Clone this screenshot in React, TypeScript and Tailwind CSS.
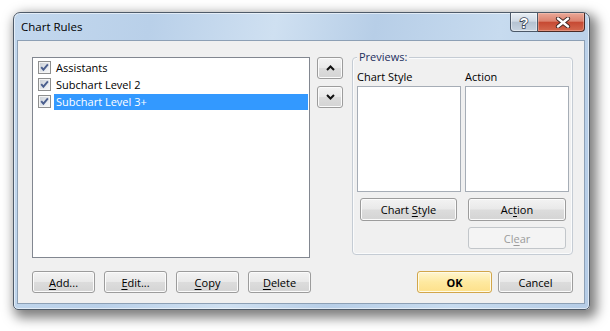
import React from 'react';

// Win7 style dialog: "Chart Rules"

const btn =
  'flex items-center justify-center rounded-[3px] border border-[#9c9c9c] bg-[linear-gradient(#f3f3f3,#e9e9e9_48%,#dcdcdc_52%,#d4d4d4)] shadow-[inset_0_0_0_1px_#fbfbfb] text-[11px] leading-none text-black';

const CheckBox = () => (
  <svg width="13" height="13" viewBox="0 0 13 13" className="shrink-0">
    <defs>
      <linearGradient id="cbfill" x1="0" y1="0" x2="1" y2="1">
        <stop offset="0" stopColor="#cdd2d9" />
        <stop offset="1" stopColor="#f6f7f8" />
      </linearGradient>
    </defs>
    <rect x="0.5" y="0.5" width="12" height="12" fill="#f4f4f4" stroke="#8e8f8f" />
    <rect x="2" y="2" width="9" height="9" fill="url(#cbfill)" />
    <path d="M3.2 6.2 L5.4 8.7 L9.9 3.4" fill="none" stroke="#4b5f8e" strokeWidth="1.9" />
  </svg>
);

const Chevron = ({ up }: { up?: boolean }) => (
  <svg width="9" height="6" viewBox="0 0 9 6">
    <path d={up ? 'M1 5 L4.5 1.5 L8 5' : 'M1 1 L4.5 4.5 L8 1'} fill="none" stroke="#111" strokeWidth="2" />
  </svg>
);

const items = [
  { label: 'Assistants', selected: false },
  { label: 'Subchart Level 2', selected: false },
  { label: 'Subchart Level 3+', selected: true },
];

export default function App() {
  return (
    <div className="w-[610px] h-[331px] overflow-hidden bg-white pt-[12px] pl-[13px] font-['Segoe_UI','Open_Sans',sans-serif] text-[11px] text-black">
      <div className="w-[577px] h-[298px] flex flex-col rounded-t-[7px] rounded-b-[5px] border border-[#4f5b69] bg-[linear-gradient(100deg,#c3d8ee_0%,#b9d0e9_22%,#cfe0f1_42%,#b7cee7_58%,#c7dbef_78%,#b5cce6_100%)] shadow-[4px_5px_12px_3px_rgba(0,0,0,0.5),inset_0_0_0_1px_rgba(255,255,255,0.55)]">
        {/* title bar */}
        <div className="h-[27px] flex justify-between">
          <span className="pl-[7px] self-center text-[11.5px] leading-none">Chart Rules</span>
          <div className="flex self-start mr-[4px]">
            <div className="w-[28px] h-[19px] flex items-center justify-center rounded-bl-[4px] border border-t-0 border-[#4b5868] bg-[linear-gradient(#e9eff5,#d0dae5_45%,#b5c3d2_52%,#c8d4e1)] shadow-[inset_0_0_0_1px_rgba(255,255,255,0.45)]">
              <svg width="12" height="15" viewBox="0 0 12 15">
                <text x="6" y="12.5" textAnchor="middle" fontSize="14" fontWeight="bold" fontFamily="Liberation Sans, sans-serif" fill="#fff" stroke="#3b4757" strokeWidth="1.6" paintOrder="stroke">?</text>
              </svg>
            </div>
            <div className="w-[47px] h-[19px] flex items-center justify-center pl-[3px] rounded-br-[4px] border border-l-0 border-t-0 border-[#4a2a26] bg-[linear-gradient(#eaa898,#dc836f_45%,#c64a33_52%,#d4694f)] shadow-[inset_0_0_0_1px_rgba(255,220,210,0.35)]">
              <svg width="16" height="11" viewBox="0 0 16 11">
                <path d="M3 1.5 L13 9.5 M13 1.5 L3 9.5" stroke="#3a2320" strokeWidth="4.2" strokeLinecap="round" />
                <path d="M3 1.5 L13 9.5 M13 1.5 L3 9.5" stroke="#fff" strokeWidth="2.4" strokeLinecap="round" />
              </svg>
            </div>
          </div>
        </div>

        {/* client area */}
        <div className="flex-1 ml-[3px] mr-[4px] mb-[5px] border border-[#8da0b5] bg-[#f0f0f0] pl-[14px] pr-[11px] pt-[16px]">
          <div className="flex items-start h-[201px]">
            {/* list */}
            <div className="w-[278px] h-[201px] border border-[#828790] bg-white pt-[1px]">
              {items.map((it) => (
                <div key={it.label} className="flex items-center h-[17px] pl-[5px]">
                  <CheckBox />
                  <span
                    className={`ml-[3px] mr-[1px] flex-1 h-[16px] flex items-center pl-[2px] leading-none ${
                      it.selected ? 'bg-[#3399ff] text-white' : ''
                    }`}
                  >
                    {it.label}
                  </span>
                </div>
              ))}
            </div>

            {/* move buttons */}
            <div className="ml-[7px] flex flex-col gap-[7px]">
              <button className={`${btn} w-[26px] h-[22px]`}>
                <Chevron up />
              </button>
              <button className={`${btn} w-[26px] h-[22px]`}>
                <Chevron />
              </button>
            </div>

            {/* previews group */}
            <div className="ml-[9px] w-[221px] h-[198px] relative rounded-[4px] border border-[#c5ccd4] shadow-[inset_0_0_0_1px_#fafbfc] pt-[12px] pl-[4px] pr-[3px]">
              <span className="absolute -top-[8px] left-[4px] px-[2px] bg-[#f0f0f0] leading-[14px] text-[#1c2f5e]">Previews:</span>
              <div className="grid grid-cols-[104px_104px] gap-x-[4px]">
                <span className="h-[14px] leading-[14px]">Chart Style</span>
                <span className="h-[14px] leading-[14px]">Action</span>
                <div className="mt-[2px] h-[106px] border border-[#a6adb6] bg-white" />
                <div className="mt-[2px] h-[106px] border border-[#a6adb6] bg-white" />
                <button className={`${btn} mt-[6px] ml-[3px] mr-[4px] h-[23px]`}>
                  Chart&nbsp;<span className="underline underline-offset-[1.5px]">S</span>tyle
                </button>
                <button className={`${btn} mt-[6px] mx-[3px] h-[23px]`}>
                  Ac<span className="underline underline-offset-[1.5px]">t</span>ion
                </button>
                <div />
                <button
                  disabled
                  className="mt-[6px] mx-[3px] h-[22px] flex items-center justify-center rounded-[3px] border border-[#c2c6ca] bg-[#f4f4f4] text-[11px] leading-none text-[#9b9b9b]"
                >
                  Cl<span className="underline underline-offset-[1.5px]">e</span>ar
                </button>
              </div>
            </div>
          </div>

          {/* bottom buttons */}
          <div className="mt-[13px] flex justify-between">
            <div className="flex gap-[9px]">
              <button className={`${btn} w-[63px] h-[22px]`}>
                <span className="underline underline-offset-[1.5px]">A</span>dd...
              </button>
              <button className={`${btn} w-[63px] h-[22px]`}>
                <span className="underline underline-offset-[1.5px]">E</span>dit...
              </button>
              <button className={`${btn} w-[63px] h-[22px]`}>
                <span className="underline underline-offset-[1.5px]">C</span>opy
              </button>
              <button className={`${btn} w-[63px] h-[22px]`}>
                <span className="underline underline-offset-[1.5px]">D</span>elete
              </button>
            </div>
            <div className="flex gap-[6px]">
              <button className="w-[75px] h-[22px] flex items-center justify-center rounded-[3px] border border-[#d2a64a] bg-[linear-gradient(#fff6cf,#fee9a0_50%,#fde08a)] shadow-[inset_0_0_0_1px_#fffbe8] text-[11px] font-bold leading-none">
                OK
              </button>
              <button className={`${btn} w-[75px] h-[22px]`}>Cancel</button>
            </div>
          </div>
        </div>
      </div>
    </div>
  );
}
